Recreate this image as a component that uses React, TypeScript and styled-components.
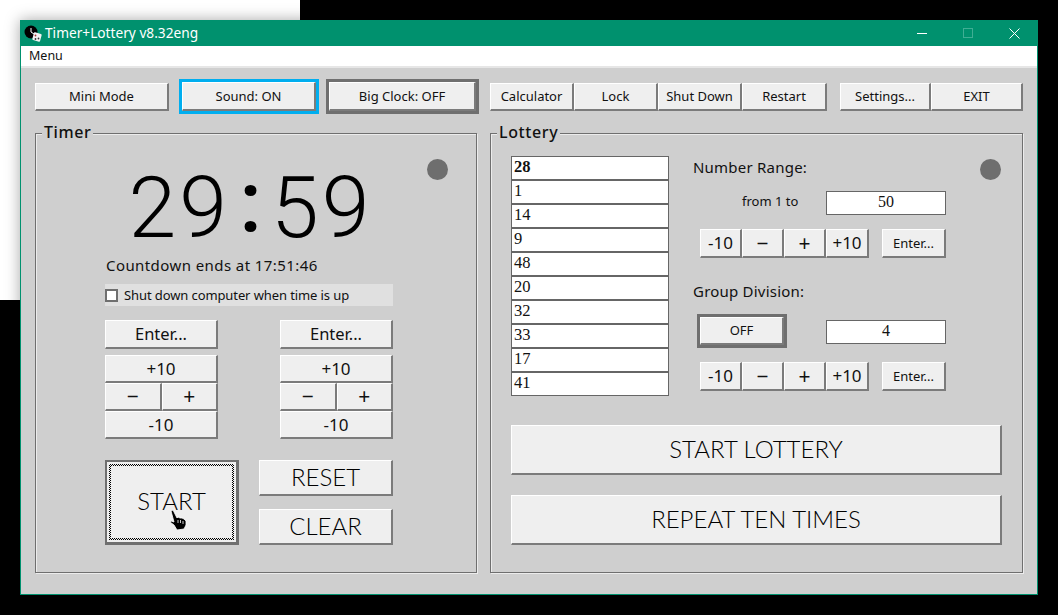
import styled, { createGlobalStyle } from 'styled-components';

const GlobalStyle = createGlobalStyle`
  html, body {
    margin: 0;
    background: #000;
  }
  * {
    box-sizing: border-box;
  }
`;

const Desktop = styled.div`
  position: relative;
  width: 1058px;
  height: 615px;
  padding: 20px;
  overflow: hidden;
  background: #000;
  font-family: 'Noto Sans', sans-serif;
  color: #111;
`;

const BackWindow = styled.div`
  position: absolute;
  left: 0;
  top: 0;
  width: 300px;
  height: 300px;
  background: #fff;
`;

const Window = styled.div`
  position: relative;
  display: flex;
  flex-direction: column;
  width: 1018px;
  height: 575px;
  border: 1px solid #00916e;
  border-top: 0;
  background: #cfcfcf;
  box-shadow: 0 0 14px rgba(0, 0, 0, 0.35);
`;

const TitleBar = styled.div`
  display: flex;
  align-items: center;
  height: 26px;
  padding-left: 3px;
  background: #00916e;
  color: #fff;
  font-size: 13.7px;
`;

const TitleText = styled.span`
  margin: -1px 0 0 3px;
`;

const WindowButtons = styled.div`
  display: flex;
  margin-left: auto;
`;

const WindowButton = styled.div`
  display: flex;
  align-items: center;
  justify-content: center;
  width: 46px;
  height: 26px;
`;

const MenuBar = styled.div`
  height: 22px;
  padding: 0 8px;
  background: #fff;
  border-bottom: 2px solid #e6e6e6;
  font-size: 12.5px;
  line-height: 20px;
`;

const Content = styled.div`
  display: flex;
  flex-direction: column;
  padding: 11px 14px 0;
`;

const Toolbar = styled.div`
  display: flex;
  align-items: center;
  height: 35px;
`;

const Button = styled.button<{ $w?: number; $h?: number; $size?: number }>`
  display: flex;
  align-items: center;
  justify-content: center;
  width: ${(p) => (p.$w ? `${p.$w}px` : '100%')};
  height: ${(p) => (p.$h ? `${p.$h}px` : '100%')};
  padding: 0 0 1px;
  background: #efefef;
  border-style: solid;
  border-width: 1px 2px 2px 1px;
  border-color: #fff #7b7b7b #7b7b7b #fff;
  border-radius: 0;
  font-family: inherit;
  font-size: ${(p) => p.$size || 13}px;
  color: #111;
`;

const Framed = styled.div<{ $color: string; $ml: number; $w: number; $h: number }>`
  display: flex;
  width: ${(p) => p.$w}px;
  height: ${(p) => p.$h}px;
  margin-left: ${(p) => p.$ml}px;
  border: 3px solid ${(p) => p.$color};
`;

const ButtonGroup = styled.div<{ $ml?: number }>`
  display: flex;
  height: 28px;
  margin-left: ${(p) => p.$ml || 0}px;
`;

const Panels = styled.div`
  display: flex;
  gap: 13px;
  margin-top: 19px;
`;

const Panel = styled.section<{ $w: number }>`
  position: relative;
  width: ${(p) => p.$w}px;
  height: 440px;
  border: 1px solid #6f6f6f;
  box-shadow: inset 1px 1px 0 #ececec, 1px 1px 0 #ececec;
`;

const TimerPanel = styled(Panel)`
  padding: 31px 83px 0 69px;
`;

const LotteryPanel = styled(Panel)`
  padding: 22px 20px 0;
`;

const Legend = styled.h2`
  position: absolute;
  left: 6px;
  top: -12px;
  margin: 0;
  padding: 0 2px;
  background: #cfcfcf;
  font-size: 16px;
  font-weight: 500;
  letter-spacing: 0.6px;
  line-height: 21px;
`;

const Lamp = styled.div<{ $left: number }>`
  position: absolute;
  left: ${(p) => p.$left}px;
  top: 25px;
  width: 21px;
  height: 21px;
  border-radius: 50%;
  background: #6e6e6e;
`;

const Clock = styled.div`
  display: flex;
  align-items: center;
  justify-content: center;
  height: 84px;
  padding: 2px 0 0 3px;
  font-family: Roboto, sans-serif;
  font-size: 86px;
  font-weight: 300;
  letter-spacing: 3px;
  line-height: 84px;
  color: #000;
`;

const ClockColon = styled.span`
  position: relative;
  top: -5px;
  width: 41px;
  font-weight: 500;
  letter-spacing: 0;
  text-align: center;
`;

const Countdown = styled.div`
  height: 20px;
  margin: 6px 0 0 1px;
  font-size: 15px;
  letter-spacing: 0.42px;
  line-height: 20px;
`;

const ShutdownRow = styled.label`
  display: flex;
  align-items: center;
  height: 22px;
  margin-top: 9px;
  background: #e0e0e0;
  font-size: 13px;
  letter-spacing: -0.1px;
`;

const CheckBox = styled.span`
  width: 13px;
  height: 13px;
  margin-right: 6px;
  background: #fff;
  border: 2px solid #6f6f6f;
`;

const Adjusters = styled.div`
  display: flex;
  justify-content: space-between;
  margin-top: 14px;
`;

const Adjuster = styled.div`
  display: grid;
  grid-template-columns: 1fr 1fr;
  grid-template-rows: 29px 6px 28px 28px 28px;
  width: 113px;
`;

const WideCell = styled.div<{ $row: number }>`
  grid-column: 1 / 3;
  grid-row: ${(p) => p.$row};
`;

const SmallCell = styled.div`
  grid-row: 4;
`;

const Actions = styled.div`
  display: flex;
  justify-content: space-between;
  margin-top: 21px;
`;

const StartButton = styled.button`
  position: relative;
  display: flex;
  width: 134px;
  height: 85px;
  padding: 2px;
  background: #efefef;
  border-style: solid;
  border-width: 2px 3px 3px 2px;
  border-color: #6f6f6f;
  border-radius: 0;
  font-family: inherit;
`;

const FocusRing = styled.span`
  display: flex;
  flex: 1;
  padding: 2px;
  background: repeating-conic-gradient(#000 0 25%, #efefef 0 50%) 0 0 / 2px 2px;
`;

const StartFace = styled.span`
  display: flex;
  flex: 1;
  align-items: center;
  justify-content: center;
  padding-bottom: 3px;
  background: #efefef;
  font-family: Lato, sans-serif;
  font-size: 24px;
  font-weight: 300;
  color: #000;
`;

const HandCursor = styled.svg`
  position: absolute;
  left: 62px;
  top: 48px;
`;

const ResetColumn = styled.div`
  display: flex;
  flex-direction: column;
  justify-content: space-between;
  width: 134px;
`;

const LargeButton = styled(Button)`
  padding-bottom: 2px;
  font-family: Lato, sans-serif;
  font-weight: 300;
  color: #000;
`;

const LotteryTop = styled.div`
  display: flex;
  gap: 24px;
`;

const ResultList = styled.ol`
  display: flex;
  flex-direction: column;
  width: 158px;
  height: 240px;
  margin: 0;
  padding: 0;
  list-style: none;
`;

const ResultRow = styled.li<{ $first?: boolean }>`
  height: 24px;
  padding-left: 2px;
  background: #fff;
  border: 1px solid #666;
  font-family: 'Liberation Serif', serif;
  font-size: 16.5px;
  font-weight: ${(p) => (p.$first ? 700 : 400)};
  line-height: 20px;
  color: #111;
`;

const Settings = styled.div`
  display: flex;
  flex-direction: column;
  width: 253px;
`;

const FieldLabel = styled.div<{ $mt: number }>`
  height: 20px;
  margin-top: ${(p) => p.$mt}px;
  font-size: 15px;
  letter-spacing: 0.22px;
  line-height: 19px;
`;

const ValueRow = styled.div<{ $mt: number }>`
  display: flex;
  align-items: center;
  margin-top: ${(p) => p.$mt}px;
`;

const FromLabel = styled.span`
  margin-left: 49px;
  padding-bottom: 4px;
  font-size: 13px;
`;

const ValueBox = styled.div<{ $shift?: number }>`
  width: 120px;
  height: 24px;
  margin: ${(p) => p.$shift || 0}px 0 0 auto;
  background: #fff;
  border: 1px solid #666;
  font-family: 'Liberation Serif', serif;
  font-size: 16px;
  line-height: 19px;
  text-align: center;
  color: #111;
`;

const StepRow = styled.div<{ $mt: number }>`
  display: flex;
  height: 29px;
  margin: ${(p) => p.$mt}px 0 0 7px;
`;

const StepGroup = styled.div`
  display: flex;
  height: 100%;
`;

const GlyphButton = styled(Button)`
  font-size: 21px;
`;

const EnterSlot = styled.div`
  width: 64px;
  margin-left: 13px;
`;

const BigButtons = styled.div`
  display: flex;
  flex-direction: column;
  gap: 20px;
  width: 491px;
  margin-top: 29px;
`;

const ClockIcon = () => (
  <svg width="18" height="17" viewBox="0 0 18 17">
    <circle cx="7" cy="7" r="6.5" fill="#000" />
    <path d="M7 3v4l3 2" stroke="#fff" strokeWidth="1" fill="none" />
    <rect x="9" y="8" width="8" height="8" rx="1" fill="#f2f2f2" transform="rotate(15 13 12)" />
    <circle cx="11.5" cy="10.5" r="0.9" fill="#a33" />
    <circle cx="14.5" cy="13.5" r="0.9" fill="#333" />
    <circle cx="11.5" cy="14" r="0.9" fill="#333" />
  </svg>
);

function Stepper() {
  return (
    <StepGroup>
      <Button $w={42} $size={17}>-10</Button>
      <GlyphButton $w={42}>−</GlyphButton>
      <GlyphButton $w={42}>+</GlyphButton>
      <Button $w={43} $size={17}>+10</Button>
    </StepGroup>
  );
}

function TimeAdjuster() {
  return (
    <Adjuster>
      <WideCell $row={1}><Button $size={16.5}>Enter...</Button></WideCell>
      <WideCell $row={3}><Button $size={17}>+10</Button></WideCell>
      <SmallCell><GlyphButton>−</GlyphButton></SmallCell>
      <SmallCell><GlyphButton>+</GlyphButton></SmallCell>
      <WideCell $row={5}><Button $size={17}>-10</Button></WideCell>
    </Adjuster>
  );
}

const results = [28, 1, 14, 9, 48, 20, 32, 33, 17, 41];

export default function App() {
  return (
    <>
      <GlobalStyle />
      <Desktop>
        <BackWindow />
        <Window>
          <TitleBar>
            <ClockIcon />
            <TitleText>Timer+Lottery v8.32eng</TitleText>
            <WindowButtons>
              <WindowButton>
                <svg width="10" height="10" viewBox="0 0 10 10"><path d="M0 5.5h10" stroke="#fff" /></svg>
              </WindowButton>
              <WindowButton>
                <svg width="10" height="10" viewBox="0 0 10 10"><rect x="0.5" y="0.5" width="9" height="9" fill="none" stroke="#3fae94" /></svg>
              </WindowButton>
              <WindowButton>
                <svg width="11" height="11" viewBox="0 0 11 11"><path d="M0.5 0.5l10 10M10.5 0.5l-10 10" stroke="#fff" /></svg>
              </WindowButton>
            </WindowButtons>
          </TitleBar>
          <MenuBar>Menu</MenuBar>
          <Content>
            <Toolbar>
              <ButtonGroup>
                <Button $w={134}>Mini Mode</Button>
              </ButtonGroup>
              <Framed $color="#00aeef" $ml={10} $w={140} $h={35}>
                <Button>Sound: ON</Button>
              </Framed>
              <Framed $color="#6f6f6f" $ml={7} $w={153} $h={35}>
                <Button>Big Clock: OFF</Button>
              </Framed>
              <ButtonGroup $ml={11}>
                <Button $w={84}>Calculator</Button>
                <Button $w={84}>Lock</Button>
                <Button $w={84}>Shut Down</Button>
                <Button $w={85}>Restart</Button>
              </ButtonGroup>
              <ButtonGroup $ml={13}>
                <Button $w={91}>Settings...</Button>
                <Button $w={92}>EXIT</Button>
              </ButtonGroup>
            </Toolbar>
            <Panels>
              <TimerPanel $w={442}>
                <Legend>Timer</Legend>
                <Lamp $left={391} />
                <Clock>
                  <span>29</span>
                  <ClockColon>:</ClockColon>
                  <span>59</span>
                </Clock>
                <Countdown>Countdown ends at 17:51:46</Countdown>
                <ShutdownRow>
                  <CheckBox />
                  Shut down computer when time is up
                </ShutdownRow>
                <Adjusters>
                  <TimeAdjuster />
                  <TimeAdjuster />
                </Adjusters>
                <Actions>
                  <StartButton>
                    <FocusRing>
                      <StartFace>START</StartFace>
                    </FocusRing>
                    <HandCursor width="18" height="20" viewBox="0 0 18 20">
                      <path
                        d="M2 1l2 -1 4 8 1 -1 2 1 2 0 2 1 2 2 0 4 -2 4 -7 1 -3 -5 -4 -3 1 -1 3 1z"
                        fill="#000"
                        stroke="#fff"
                        strokeWidth="0.8"
                      />
                      <path d="M9 10v3M11.5 10v3M14 11v3" stroke="#fff" strokeWidth="0.8" />
                    </HandCursor>
                  </StartButton>
                  <ResetColumn>
                    <LargeButton $h={36} $size={24}>RESET</LargeButton>
                    <LargeButton $h={36} $size={24}>CLEAR</LargeButton>
                  </ResetColumn>
                </Actions>
              </TimerPanel>
              <LotteryPanel $w={533}>
                <Legend>Lottery</Legend>
                <Lamp $left={489} />
                <LotteryTop>
                  <ResultList>
                    {results.map((n, i) => (
                      <ResultRow key={n} $first={i === 0}>{n}</ResultRow>
                    ))}
                  </ResultList>
                  <Settings>
                    <FieldLabel $mt={2}>Number Range:</FieldLabel>
                    <ValueRow $mt={13}>
                      <FromLabel>from 1 to</FromLabel>
                      <ValueBox>50</ValueBox>
                    </ValueRow>
                    <StepRow $mt={14}>
                      <Stepper />
                      <EnterSlot><Button>Enter...</Button></EnterSlot>
                    </StepRow>
                    <FieldLabel $mt={24}>Group Division:</FieldLabel>
                    <ValueRow $mt={12}>
                      <Framed $color="#6f6f6f" $ml={4} $w={90} $h={34}>
                        <Button>OFF</Button>
                      </Framed>
                      <ValueBox $shift={2}>4</ValueBox>
                    </ValueRow>
                    <StepRow $mt={14}>
                      <Stepper />
                      <EnterSlot><Button>Enter...</Button></EnterSlot>
                    </StepRow>
                  </Settings>
                </LotteryTop>
                <BigButtons>
                  <LargeButton $h={50} $size={24}>START LOTTERY</LargeButton>
                  <LargeButton $h={50} $size={24}>REPEAT TEN TIMES</LargeButton>
                </BigButtons>
              </LotteryPanel>
            </Panels>
          </Content>
        </Window>
      </Desktop>
    </>
  );
}
